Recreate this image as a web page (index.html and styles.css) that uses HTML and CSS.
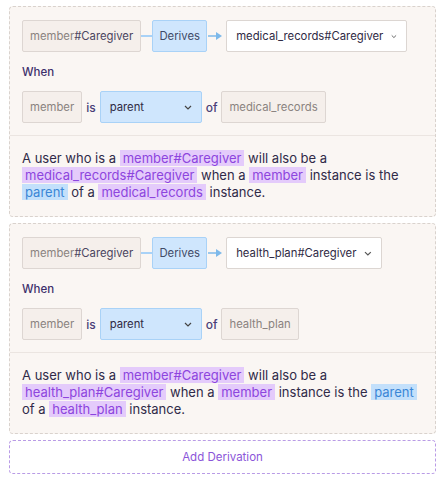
FILE: index.html
```html
<!DOCTYPE html>
<html>
<head>
<meta charset="utf-8">
<link rel="stylesheet" href="styles.css">
</head>
<body>
<div class="list">
  <div class="card">
    <div class="card-top">
      <div class="row">
        <div class="chip">member<span class="dark">#Caregiver</span></div>
        <div class="flow">
          <span class="line"></span>
          <div class="derives">Derives</div>
          <span class="line arrow"><svg width="15" height="10" viewBox="0 0 15 10"><path d="M0 5H9" stroke="#7db9ea" stroke-width="1.5"/><path d="M8 1L14 5L8 9Z" fill="#7db9ea"/></svg></span>
        </div>
        <div class="select wide1">medical_records#Caregiver<svg class="chev" width="8" height="5" viewBox="0 0 8 5"><path d="M1 1L4 4L7 1" fill="none" stroke="#555" stroke-width="1.2"/></svg></div>
      </div>
      <div class="when">When</div>
      <div class="row">
        <div class="chip">member</div>
        <span class="word">is</span>
        <div class="select blue">parent<svg class="chev" width="8" height="5" viewBox="0 0 8 5"><path d="M1 1L4 4L7 1" fill="none" stroke="#444" stroke-width="1.2"/></svg></div>
        <span class="word">of</span>
        <div class="chip">medical_records</div>
      </div>
    </div>
    <div class="card-desc">A user who is a <span class="hl">member#Caregiver</span> will also be a <span class="hl">medical_records#Caregiver</span> when a <span class="hl">member</span> instance is the <span class="hl blue-hl">parent</span> of a <span class="hl">medical_records</span> instance.</div>
  </div>

  <div class="card">
    <div class="card-top">
      <div class="row">
        <div class="chip">member<span class="dark">#Caregiver</span></div>
        <div class="flow">
          <span class="line"></span>
          <div class="derives">Derives</div>
          <span class="line arrow"><svg width="15" height="10" viewBox="0 0 15 10"><path d="M0 5H9" stroke="#7db9ea" stroke-width="1.5"/><path d="M8 1L14 5L8 9Z" fill="#7db9ea"/></svg></span>
        </div>
        <div class="select wide2">health_plan#Caregiver<svg class="chev" width="8" height="5" viewBox="0 0 8 5"><path d="M1 1L4 4L7 1" fill="none" stroke="#555" stroke-width="1.2"/></svg></div>
      </div>
      <div class="when">When</div>
      <div class="row">
        <div class="chip">member</div>
        <span class="word">is</span>
        <div class="select blue">parent<svg class="chev" width="8" height="5" viewBox="0 0 8 5"><path d="M1 1L4 4L7 1" fill="none" stroke="#444" stroke-width="1.2"/></svg></div>
        <span class="word">of</span>
        <div class="chip">health_plan</div>
      </div>
    </div>
    <div class="card-desc">A user who is a <span class="hl">member#Caregiver</span> will also be a <span class="hl">health_plan#Caregiver</span> when a <span class="hl">member</span> instance is the <span class="hl blue-hl">parent</span> of a <span class="hl">health_plan</span> instance.</div>
  </div>

  <div class="add">Add Derivation</div>
</div>
</body>
</html>
```
FILE: styles.css
```css
* { box-sizing: border-box; }
html, body { margin: 0; padding: 0; background: #ffffff; }
body {
  font-family: Inter, "Noto Sans", sans-serif;
  color: #3a3355;
}
.list {
  padding: 6px 9px 0 9px;
  display: flex;
  flex-direction: column;
  gap: 6px;
}
.card {
  border: 1px dashed #d9d2cd;
  border-radius: 4px;
  background: #faf6f3;
}
.card-top {
  padding: 13px 12px 12px 12px;
  border-bottom: 1px solid #ebe5e1;
}
.row {
  display: flex;
  align-items: center;
  height: 32px;
}
.chip {
  height: 32px;
  display: flex;
  align-items: center;
  padding: 0 7px;
  border: 1px solid #ddd6d2;
  border-radius: 2px;
  background: #f5efeb;
  color: #8a8380;
  font-size: 11.3px;
}
.chip .dark { color: #4b4560; }
.flow {
  display: flex;
  align-items: center;
}
.line {
  display: block;
  width: 11px;
  height: 1.5px;
  background: #a9d2f7;
  margin: 0;
}
.line.arrow {
  width: 19px;
  height: 10px;
  background: none;
  display: flex;
  align-items: center;
  padding-left: 1px;
}
.line.arrow svg { display: block; }
.derives {
  height: 32px;
  display: flex;
  align-items: center;
  padding: 0 7px;
  width: 55px;
  justify-content: center;
  background: #cfe6fd;
  border: 1px solid #a9d2f7;
  border-radius: 2px;
  color: #3f4a66;
  font-size: 11.3px;
}
.select {
  height: 32px;
  display: flex;
  align-items: center;
  justify-content: space-between;
  padding: 0 9px 0 9px;
  background: #ffffff;
  border: 1px solid #dcd6d2;
  border-radius: 2px;
  color: #2f2a44;
  font-size: 11.3px;
}
.select .chev { margin-left: 8px; display: block; }
.wide1 { width: 181px; }
.wide2 { width: 156px; }
.select.blue {
  width: 102px;
  background: #cfe6fd;
  border-color: #a9d2f7;
}
.word {
  font-size: 12px;
  color: #4a3f78;
  padding: 0 4px;
  font-weight: 500;
}
.when {
  font-size: 11.5px;
  font-weight: 500;
  color: #3d2f6b;
  height: 39px;
  display: flex;
  align-items: center;
}
.card-desc {
  padding: 14px 12px 15px 12px;
  font-size: 13px;
  line-height: 17px;
  color: #302a48;
}
.hl {
  background: #e4cbfb;
  color: #8d45de;
  padding: 0 3px;
}
.hl.blue-hl {
  background: #c3e0fb;
  color: #3a86d6;
}
.add {
  height: 34px;
  border: 1px dashed #b99be6;
  border-radius: 4px;
  display: flex;
  align-items: center;
  justify-content: center;
  color: #8b55d9;
  font-size: 11.5px;
  background: #fff;
}
```
